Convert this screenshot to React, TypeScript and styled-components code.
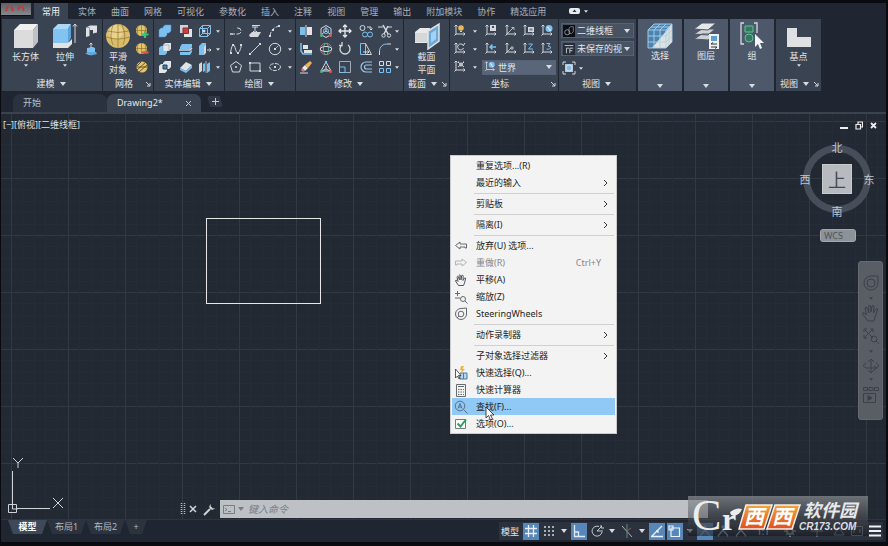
import React from "react";
import styled, { createGlobalStyle, css } from "styled-components";

const c = {
  chrome: "#202631",
  panel: "#3a4351",
  panelLight: "#4d596b",
  line: "#222832",
  canvas: "#222933",
  text: "#d3d8de",
  pale: "#d9dde2",
  blue: "#7cc0f0",
  active: "#5786b8",
  strip: "#3a4250",
};

const GlobalStyle = createGlobalStyle`
  *, *::before { box-sizing: border-box; }
  body {
    margin: 0;
    background: #07090c;
    font-family: "Noto Sans", "Noto Sans CJK SC", sans-serif;
    font-size: 9px;
    color: ${c.text};
  }
  button, input, select {
    font: inherit;
    color: inherit;
    margin: 0;
    padding: 0;
    border: 0;
    background: none;
  }
  svg { display: block; flex: none; }
  h1, h2, p { margin: 0; font: inherit; }
`;

/* ---------- icons ---------- */

const L = "#d5d9de";
const B = "#7cc0f0";
const G = "#4fb286";
const R = "#d8594f";
const Y = "#e3c56c";

const ucs = (
  <path d="M3 1v9h9M1.5 2.5 3 1l1.5 1.5M10.5 8.5 12 10l-1.5 1.5M3 10l-1.5 1.5" stroke={L} />
);

const glyphs: Record<string, React.ReactNode> = {
  polysolid: (
    <>
      <path d="M2 3.5 6 1.5h7v7L9 9.5V6H5.500v6L2 13z" fill="#dfe2e5" />
      <path d="M2 3.500h3.500V6" stroke="#9ba3ad" />
    </>
  ),
  presspull: (
    <>
      <path d="M3 6 9 5l2 1v6l-7 1-1-2z" fill={B} />
      <path d="M1 11.500 4 10h8l1 2-6 1.500z" fill="#5da8e0" />
      <path d="M7 6V1M5.500 2.500 7 1l1.500 1.500" stroke={L} />
    </>
  ),
  meshMore: (
    <>
      <circle cx="6.500" cy="6.500" r="5.500" fill={Y} />
      <path d="M1 6.500h11M6.500 1v11M3 2.500q-1.500 4 0 8M10 2.500q1.500 4 0 8" stroke="#94722b" strokeWidth=".7" />
      <path d="M10 7v7M6.500 10.500h7" stroke="#3cc276" strokeWidth="2.200" />
    </>
  ),
  meshLess: (
    <>
      <circle cx="6.500" cy="6.500" r="5.500" fill={Y} />
      <path d="M1 6.500h11M6.500 1v11M3 2.500q-1.500 4 0 8M10 2.500q1.500 4 0 8" stroke="#94722b" strokeWidth=".7" />
      <path d="M7 10.500h6.500" stroke={R} strokeWidth="2.400" />
    </>
  ),
  meshRefine: (
    <>
      <circle cx="7" cy="7" r="5.500" fill={Y} />
      <path d="M2 10 11 2M4 12l8-7M2 6l4-4M1.500 7h11" stroke="#5d4a24" strokeWidth=".9" />
    </>
  ),
  union: <path d="M1 6 3 4h2V3l2-2h6v6l-2 2H9v2l-2 2H1z" fill={B} stroke="#4c93cc" strokeWidth=".5" />,
  subtract: (
    <>
      <path d="M1 6 3 4h6v7l-2 2H1z" fill={B} />
      <path d="M5 3 7 1h6v6l-2 2H5z" fill="#e2e5e8" />
      <path d="M5 9V3h6v6" stroke="#8e98a5" strokeWidth=".6" />
    </>
  ),
  intersect: (
    <>
      <path d="M1 6 3 4h6v7l-2 2H1zM5 3l2-2h6v6l-2 2H5z" fill="#e2e5e8" />
      <path d="M5 5h4v4H5z" fill="#3b82be" stroke="#2d3c50" />
    </>
  ),
  interfere: (
    <>
      <path d="M1 1h8v8H1z" fill="#cfd4da" />
      <path d="M5 5h8v8H5z" fill="#e2e5e8" />
      <path d="M4 4h5.500v5.500H4z" fill="#c8403c" stroke="#813039" />
    </>
  ),
  sliceSolid: (
    <>
      <path d="M1 5 3 2h10v3l-2 2H1zM1 10h9l3-2v2l-2 3H1z" fill={B} />
      <path d="M0 8h11l2-2" stroke={L} strokeWidth="1.500" />
    </>
  ),
  thicken: (
    <>
      <path d="M1 8 7 2l6 3-6 6z" fill="#e2e5e8" />
      <path d="m1 8 6 3 6-6v3l-6 5-6-3z" fill={B} />
    </>
  ),
  extractEdges: (
    <>
      <path d="M1.500 4.500h8v8h-8zM4.500 1.500h8v8l-3 3M1.500 4.500l3-3M9.500 4.500l3-3M4.500 1.500v8h8M1.500 12.500l3-3" stroke={B} />
      <circle cx="6" cy="7" r="1.500" fill={L} />
    </>
  ),
  extrudeFace: (
    <>
      <path d="M1 4 4 1h4v3L6 6v7H1z" fill={B} />
      <path d="M6 5 8 3v8l-2 2z" fill={L} />
      <path d="M9 8h4M11.500 6.500 13 8l-1.500 1.500" stroke={L} />
    </>
  ),
  separate: (
    <>
      <path d="M1 4 4 2v9l-3 2z" fill={L} />
      <path d="M9 4 12 2v9l-3 2zM5 4l2-1v8l-2 1z" fill={B} />
      <path d="M8 1v12" stroke={L} strokeWidth=".7" />
    </>
  ),
  polyline: <path d="M1 10h8a3 3 0 0 0 0-6H8M1 10h3" stroke={L} strokeDasharray="5 1.500" />,
  project: (
    <>
      <path d="M1 11 4 8h9l-3 5H2z" fill={L} />
      <path d="M4 3h6M7 3v6M5 7l2 2 2-2M4 1.500h8" stroke={L} />
    </>
  ),
  arc: (
    <>
      <path d="M2 12Q3 4 11 2" stroke={L} strokeDasharray="4 1.500" />
      <path d="M1 11h2v2H1zM10 1h2v2h-2zM4 5h2v2H4z" fill={L} />
    </>
  ),
  spline: (
    <>
      <path d="M1.500 11C3 1 5 1 6.500 7s4 5 6-4" stroke={L} />
      <path d="M1 10h2v2H1zM3 2h2v2H3zM8 10h2v2H8zM11 2h2v2h-2z" fill={L} />
    </>
  ),
  line: (
    <>
      <path d="M2 12 12 2" stroke={L} />
      <path d="M1 11h2v2H1zM11 1h2v2h-2z" fill={L} />
    </>
  ),
  circle: (
    <>
      <circle cx="7" cy="7" r="5.700" stroke={L} />
      <path d="m7 7 3.500-3.500" stroke={B} />
      <path d="M6 6h2v2H6z" fill={L} />
    </>
  ),
  polygon: (
    <>
      <path d="m7 1.500 5.500 4-2 6.500h-7l-2-6.500z" stroke={L} />
      <circle cx="7" cy="7" r="1" fill={L} />
    </>
  ),
  rect: (
    <>
      <path d="M2 3h10v8H2z" stroke={L} />
      <path d="M1 2h2v2H1zM11 10h2v2h-2z" fill={L} />
    </>
  ),
  ellipse: (
    <>
      <ellipse cx="7" cy="7" rx="5.500" ry="3.500" stroke={L} strokeDasharray="4 1.200" />
      <path d="M6 6h2v2H6z" fill={L} />
    </>
  ),
  mirror: (
    <>
      <path d="M1 3h5v8H1z" fill={B} />
      <path d="M8 3h5v8H8z" fill="#e2e5e8" />
      <path d="M7 1v12" stroke={L} />
    </>
  ),
  align: (
    <>
      <path d="M2 1v8l2 3h9" stroke={B} strokeWidth="1.500" />
      <path d="M4 3h5v4H4zM5 8h8v3H5z" fill="#e2e5e8" />
    </>
  ),
  erase: (
    <>
      <path d="m3 8 3 3 3-3-3-3z" fill="#e8e8e8" />
      <path d="m6 5 5-4 2 2-4 5z" fill="#e9b15c" />
      <path d="m3 8 3 3-2 1-2-2z" fill="#d87777" />
      <path d="M1 13h8" stroke={L} />
    </>
  ),
  move3d: (
    <>
      <path d="m7 1.500 5 3v6l-5 3-5-3v-6z" stroke={L} />
      <path d="M7 7v-4M7 7l4 3M7 7l-4 3" stroke={L} />
      <circle cx="7" cy="7" r="2.500" stroke={B} />
      <circle cx="2.500" cy="11.500" r="1.500" fill={G} />
      <circle cx="11.500" cy="11.500" r="1.500" fill={R} />
    </>
  ),
  rotate3d: (
    <>
      <circle cx="7" cy="7" r="5.700" stroke="#b8747c" />
      <ellipse cx="7" cy="7" rx="2.500" ry="5.700" stroke={G} />
      <ellipse cx="7" cy="7" rx="5.700" ry="2.500" stroke={L} />
    </>
  ),
  scale3d: (
    <>
      <path d="m7 2 5 9H2zM7 6v3l4 2M7 9l-4 2" stroke={L} />
      <circle cx="2.500" cy="11.500" r="1.500" fill={G} />
      <circle cx="11.500" cy="11.500" r="1.500" fill={R} />
      <circle cx="7" cy="2" r="1.200" fill={B} />
    </>
  ),
  move: <path d="M7 1v12M1 7h12M5 3l2-2 2 2M5 11l2 2 2-2M3 5 1 7l2 2M11 5l2 2-2 2" stroke="#e6e9ec" strokeWidth="1.300" />,
  rotate: <path d="M4 3a5 5 0 1 0 6 0M4 0v3.500H1" stroke={L} strokeWidth="1.300" />,
  scale: (
    <>
      <path d="M1.500 1.500h11v11h-11z" stroke="#9eabbb" />
      <path d="M1.500 7h5.500v5.500H1.500z" stroke={B} />
    </>
  ),
  copy: (
    <>
      <circle cx="3.500" cy="4" r="2.500" stroke={L} />
      <circle cx="6" cy="10.500" r="2.500" stroke={B} />
      <circle cx="11" cy="10.500" r="2.500" stroke={B} />
      <path d="M8 3h4v3M10.500 4.500 12 6l1.500-1.500" stroke={L} />
    </>
  ),
  stretch: (
    <>
      <path d="M1.500 1.500h5v11h-5z" stroke={B} />
      <path d="m6.500 1.500 6 11h-6M4 10h6M8.500 8.500 10 10l-1.500 1.500" stroke={L} />
    </>
  ),
  offset: <path d="M13 2H7a5 5 0 0 0 0 10h6M13 5H7.500a2 2 0 0 0 0 4H13" stroke="#9cc6ea" strokeWidth="1.200" />,
  trim: (
    <>
      <path d="m5 1 5 9M10 2 6 10" stroke={L} strokeWidth="1.500" />
      <circle cx="5.500" cy="11.500" r="1.700" stroke={L} />
      <circle cx="11" cy="11.500" r="1.700" stroke={L} />
      <path d="M0 3h5M10 3h4" stroke={L} />
    </>
  ),
  fillet: (
    <>
      <path d="M1.500 13V9" stroke={L} />
      <path d="M1.500 9A7 7 0 0 1 9 2" stroke={B} />
      <path d="M9 2h4" stroke={L} />
    </>
  ),
  array: (
    <>
      <path d="M1.500 1.500h4v4h-4zM8.500 1.500h4v4h-4z" stroke={L} />
      <path d="M1.500 8.500h4v4h-4zM8.500 8.500h4v4h-4z" stroke={B} />
    </>
  ),
  ucsBulb: (<>{ucs}<circle cx="8" cy="4" r="2.800" fill="#e7b95b" /><path d="M7 7.500h2" stroke={L} /></>),
  ucsNamed: (<>{ucs}<path d="M6 1h6v6H6z" fill={L} /><path d="M8 2h2v2H8z" fill="#3b5068" /></>),
  ucs3pt: (<>{ucs}<path d="m3 10 6-6M7.500 3.500H10V6" stroke={L} strokeWidth=".8" /></>),
  ucsView: (<>{ucs}<path d="M6 3h6v5H6z" fill={L} /><path d="M7.500 4.500h3v2h-3z" fill="#6d7884" /></>),
  ucsWorld: (<>{ucs}<circle cx="9" cy="4.500" r="3.500" fill={B} /><path d="M7 3q2 0 2 2t2 1" stroke="#e8f4ff" /></>),
  ucsX: (<>{ucs}<path d="M10 3a3 3 0 1 0 .5 3M12 1l-2 3" stroke={L} /></>),
  ucsPrev: (<>{ucs}<path d="M12 5H6M8.500 2.500 6 5l2.500 2.500" stroke={B} strokeWidth="1.500" /></>),
  ucsOrigin: (<>{ucs}<path d="m3 10 4-4M7 5h2v2H7z" stroke={L} strokeWidth=".8" /></>),
  ucsZ: (<>{ucs}<path d="M6.500 2h4l-4 5h4.500" stroke={B} /></>),
  ucs3: (<>{ucs}<path d="M6.500 1.500H10l-2 2.500q3 0 2.500 2T6.500 7" stroke={B} /></>),
  ucsFace: (<>{ucs}<path d="m5 2 6 5M11 2 5 7M5 2h1M10 2h1" stroke={L} /><circle cx="8" cy="4.500" r="1.500" stroke={L} /></>),
  focus: (
    <>
      <path d="M1 4V1h3M10 1h3v3M13 10v3h-3M4 13H1v-3" stroke={L} />
      <path d="M3 3h8v8H3z" fill="#b9c6d2" />
      <circle cx="7" cy="7" r="3" fill={B} stroke="#eef" strokeWidth=".7" />
    </>
  ),
  visual: (
    <>
      <path d="M0 0h14v14H0z" fill="#0b0e12" />
      <circle cx="5" cy="8.500" r="3" stroke="#9ba2aa" />
      <path d="M7 3.500 9 2h3v6l-2 2H7z" stroke="#9ba2aa" strokeWidth=".8" />
    </>
  ),
  viewRef: (
    <>
      <path d="M0 0h14v14H0z" fill="#262d38" />
      <path d="M2 3h10M4 12V6h3M8 12V6h4M8 9h3" stroke={L} />
    </>
  ),
};

const Svg14 = ({ name, size = 14 }: { name: string; size?: number }) => (
  <svg width={size} height={size} viewBox="0 0 14 14" fill="none" aria-hidden="true">
    {glyphs[name]}
  </svg>
);

const Caret = ({ small, color = "#d9dde2" }: { small?: boolean; color?: string }) => (
  <svg width={small ? 4 : 6} height={small ? 3 : 4} viewBox="0 0 6 4" aria-hidden="true">
    <path d="M0 0h6L3 4z" fill={color} />
  </svg>
);

const Launcher = () => (
  <svg width="6" height="6" viewBox="0 0 6 6" fill="none" aria-hidden="true">
    <path d="m1 1 4 4M5 2v3H2" stroke={L} />
  </svg>
);

const bigIcons: Record<string, React.ReactNode> = {
  box: (
    <>
      <path d="m1 8 6-6h18l-5 6z" fill="#f1f1f1" />
      <path d="M1 8h19v18H1z" fill="#dcdcdd" />
      <path d="m20 8 5-6v18l-5 6z" fill="#bfc1c4" />
    </>
  ),
  extrude: (
    <>
      <path d="M1 20h16l3-3v5l-4 4H1z" fill="#e3e3e4" />
      <path d="m1 7 5-5h13l-3 5z" fill="#a9d8f8" />
      <path d="M1 7h15v14H1z" fill="#83c3f1" />
      <path d="m16 7 3-5v14l-3 5z" fill="#5ba3da" />
      <path d="M23 2v19M21 4.500l2-2.500 2 2.500" stroke={L} fill="none" />
    </>
  ),
  sphere: (
    <>
      <circle cx="13" cy="14" r="12" fill="#d9bd6b" />
      <circle cx="11" cy="10" r="7" fill="#f0dc97" opacity=".7" />
      <path d="M2 9q11 3 22 0M1 15q12 4 24 0M8 3q-4 11 0 20M17 3q5 11 1 20M13 2v24" stroke="#806425" strokeWidth=".7" fill="none" opacity=".8" />
    </>
  ),
  section: (
    <>
      <path d="m1 10 5-4h10v11l-3 4H1z" fill="#e9e9ea" />
      <path d="M1 11h12v9H1z" fill="#d6d7d9" />
      <path d="M14 9 25 2v17l-11 8z" fill="#6fa9d4" stroke="#e0e4e8" strokeWidth="1.500" />
      <path d="m17 11 5-3v9l-5 4z" fill="#9fd3f7" />
    </>
  ),
  select: (
    <>
      <path d="m1 8 6-6h18v18l-6 6H1z" fill="#4f83ad" />
      <path d="M25 2v18l-6 6H5z" fill="#e0e0dc" />
      <path d="M1 8h18v18H1zM7 2h18v18M1 8l6-6M19 8l6-6M19 26l6-6M7 8v18M13 8v18M1 14h18M1 20h18M13 2 7 8M19 2l-6 6M4 5h18v18M19 14l6-6M19 20l6-6" stroke="#a6d3f2" strokeWidth=".9" fill="none" />
    </>
  ),
  layers: (
    <>
      <path d="m1 17 8-5h13l-7 6zM1 12l8-5h13l-7 6z" fill="#cfd2d5" stroke="#4d596b" />
      <path d="m1 7 8-6h14l-8 7z" fill="#e6e7e8" stroke="#4d596b" />
      <path d="M16 12h10v15H16z" fill="#f0f1f2" />
      <path d="M18 14h6v5h-6z" fill="#5b9fd5" />
      <path d="M18 22h6M20 20.500 18 22M18 25h6M22 26.500l2-1.500" stroke="#333" fill="none" />
    </>
  ),
  group: (
    <>
      <path d="M5 1H2v21h3M15 1h3v10" stroke={L} strokeWidth="1.300" fill="none" />
      <path d="M6 4h8v6H6z" fill="#337a5c" stroke="#5cc596" />
      <circle cx="10" cy="16" r="4" fill="#337a5c" stroke="#5cc596" />
      <path d="M16 12v13l3-3 2 5 2-1-2-5h4z" fill="#f4f5f6" />
    </>
  ),
  base: <path d="M1 6h10v9h14v10H1z" fill="#dfe0e1" />,
};

const BigIcon = ({ name }: { name: string }) => (
  <svg width="26" height="28" viewBox="0 0 26 28" aria-hidden="true">
    {bigIcons[name]}
  </svg>
);

/* ---------- frame ---------- */

const Window = styled.div`
  display: flex;
  flex-direction: column;
  min-height: 100vh;
  background: ${c.chrome};
  border: solid #090b10;
  border-width: 3px 2px 4px 1px;
`;

const RibbonTabs = styled.nav`
  display: flex;
  height: 16px;
  align-items: stretch;
`;

const AppButton = styled.button`
  width: 30px;
  height: 13px;
  margin-right: 3px;
  padding-left: 3px;
  background: linear-gradient(#5b5f66, #85888d);
  border-bottom: 1px solid #111;
`;

const RibbonTab = styled.button<{ $on?: boolean }>`
  padding: 2px ${(p) => (p.$on ? 8 : 7)}px 0;
  margin-right: ${(p) => (p.$on ? 3 : 1)}px;
  color: ${(p) => (p.$on ? "#eef1f4" : "#a9b0ba")};
  background: ${(p) => (p.$on ? c.panel : "transparent")};
  white-space: nowrap;
  line-height: 14px;
`;

const VideoButton = styled.button`
  display: flex;
  align-items: center;
  gap: 4px;
  margin-left: 15px;
`;

const Ribbon = styled.div`
  display: flex;
  padding-left: 1px;
`;

const Panel = styled.section<{ $w: number; $gap?: number; $light?: boolean }>`
  display: flex;
  flex-direction: column;
  width: ${(p) => p.$w}px;
  margin-right: ${(p) => p.$gap ?? 1}px;
  background: ${(p) => (p.$light ? c.panelLight : c.panel)};
`;

const PanelBody = styled.div`
  display: flex;
  align-items: flex-start;
  height: 58px;
  padding-top: 3px;
`;

const PanelTitle = styled.h2`
  display: flex;
  align-items: center;
  height: 14px;
  padding-right: 2px;
  line-height: 14px;
`;

const TitleText = styled.span`
  flex: 1;
  display: flex;
  align-items: center;
  justify-content: center;
  gap: 5px;
  color: #e3e6ea;
`;

const BigButton = styled.button<{ $w: number }>`
  display: flex;
  flex-direction: column;
  align-items: center;
  width: ${(p) => p.$w}px;
  line-height: 13px;
  color: #e3e6ea;
  & > svg + span { display: block; }
  & > span + svg { margin-top: 1px; }
`;

const LightButton = styled.button`
  display: flex;
  flex-direction: column;
  align-items: center;
  height: 72px;
  padding: 3px 0;
  line-height: 12px;
  color: #e3e6ea;
  & > span + svg { margin-top: auto; }
`;

const ToolGrid = styled.div<{ $cols: string }>`
  display: grid;
  grid-template-columns: ${(p) => p.$cols};
  grid-auto-rows: 18px;
`;

const Tool = styled.button`
  display: flex;
  align-items: center;
  justify-content: center;
`;

const Stack = styled.div`
  display: flex;
  flex-direction: column;
  align-items: flex-start;
  gap: 3px;
  padding: 1px 2px 0;
  flex: 1;
  min-width: 0;
`;

const SelectWrap = styled.label<{ $span?: boolean }>`
  position: relative;
  display: flex;
  align-items: center;
  width: 100%;
  height: 15px;
  background: #475262;
  border: 1px solid #566173;
  ${(p) => p.$span && css`grid-column: 3 / 7; align-self: center; justify-self: end; width: 74px; background: #596679;`}
  & > svg:first-child { margin-left: 1px; }
  & > svg:last-child {
    position: absolute;
    right: 3px;
    pointer-events: none;
  }
`;

const Select = styled.select`
  appearance: none;
  flex: 1;
  min-width: 0;
  padding: 0 2px;
  margin-right: 9px;
  color: #e3e6ea;
  height: 13px;
  line-height: 13px;
`;

/* ---------- document tabs ---------- */

const DocTabs = styled.nav`
  display: flex;
  align-items: flex-end;
  height: 23px;
  padding-left: 12px;
  border-bottom: 2px solid ${c.strip};
`;

const DocTab = styled.div<{ $on?: boolean }>`
  display: flex;
  align-items: center;
  justify-content: space-between;
  width: 94px;
  height: 18px;
  padding: 0 9px 0 10px;
  border-radius: 7px 7px 0 0;
  background: ${(p) => (p.$on ? "#3a4351" : "#2b323f")};
  color: ${(p) => (p.$on ? "#e6e9ec" : "#b9bfc8")};
`;

const PlainButton = styled.button`
  line-height: 12px;
  display: flex;
  align-items: center;
`;

const AddTab = styled(PlainButton)`
  align-self: center;
  justify-content: center;
  width: 16px;
  height: 11px;
  margin-left: 6px;
  border-radius: 3px;
  background: #303845;
  clip-path: polygon(0 0, 80% 0, 100% 100%, 20% 100%);
`;

/* ---------- drawing area ---------- */

const gridLine = "#313944";
const minor = "#252c37";
const stops = `${gridLine} 0 1px, transparent 1px 11px, ${minor} 11px 12px, transparent 12px 23px, ${minor} 23px 24px, transparent 24px 34px, ${minor} 34px 35px, transparent 35px 46px, ${minor} 46px 47px, transparent 47px`;

const Canvas = styled.main`
  position: relative;
  flex: 1;
  background-color: ${c.canvas};
  background-image: linear-gradient(90deg, ${stops}), linear-gradient(${stops});
  background-size: 57px 57px;
  background-position: 10px 7px;
  border-bottom: 1px solid #2d3541;
`;

const ViewLabel = styled.p`
  padding: 4px 2px;
  line-height: 13px;
  color: #dde1e5;
`;

const DrawnRect = styled.div`
  position: absolute;
  left: 205px;
  top: 104px;
  width: 115px;
  height: 86px;
  border: 1px solid #e4e6e8;
`;

const Axes = styled.svg`
  position: absolute;
  left: 6px;
  bottom: 1px;
`;

const WindowButtons = styled.div`
  position: absolute;
  right: 9px;
  top: 7px;
  display: flex;
  gap: 7px;
`;

const ViewCube = styled.div`
  position: absolute;
  right: 10px;
  top: 26px;
  display: grid;
  grid-template: 14px 50px 14px / 14px 50px 14px;
  place-items: center;
  font: 12px/14px "Noto Sans CJK SC", sans-serif;
  color: #c3c7cc;
  &::before {
    content: "";
    grid-area: 1 / 1 / 4 / 4;
    width: 68px;
    height: 68px;
    border: 7px solid #474e59;
    border-radius: 50%;
  }
`;

const Direction = styled.button<{ $area: string }>`
  grid-area: ${(p) => p.$area};
  font-size: 11px;
`;

const CubeFace = styled.button`
  grid-area: 2 / 2;
  width: 30px;
  height: 30px;
  background: #b7babe;
  border: 1px solid #c8cbce;
  color: #454a51;
  font-size: 18px;
  line-height: 26px;
`;

const Wcs = styled.button`
  position: absolute;
  right: 30px;
  top: 115px;
  width: 36px;
  height: 13px;
  padding-left: 3px;
  text-align: left;
  line-height: 11px;
  border-radius: 3px;
  border: 1px solid #a5a9af;
  background: #8d9299;
  color: #4e545c;
`;

const NavBar = styled.div`
  position: absolute;
  right: 3px;
  top: 147px;
  width: 25px;
  height: 159px;
  display: flex;
  flex-direction: column;
  align-items: center;
  justify-content: space-between;
  padding: 12px 0 15px;
  background: #595e65;
  border: 1px solid #656a71;
  border-radius: 3px;
`;

const CommandBar = styled.form`
  position: absolute;
  left: 179px;
  right: 178px;
  bottom: 1px;
  height: 18px;
  display: flex;
  align-items: center;
  gap: 3px;
`;

const CommandField = styled.label`
  flex: 1;
  display: flex;
  align-items: center;
  gap: 3px;
  height: 18px;
  padding-left: 3px;
  background: #bdc1c5;
`;

const CommandInput = styled.input`
  flex: 1;
  min-width: 0;
  margin-left: 1px;
  font-style: italic;
  font-size: 10px;
  color: #4d545c;
  outline: none;
  &::placeholder { color: #777d84; opacity: 1; }
`;

/* ---------- context menu ---------- */

const Menu = styled.div`
  position: absolute;
  left: 449px;
  top: 41px;
  width: 167px;
  padding: 1px;
  background: #f3f3f4;
  border: 1px solid #c9cbce;
  color: #1e1f21;
`;

const MenuItem = styled.button<{ $hot?: boolean }>`
  display: grid;
  grid-template-columns: 16px 1fr auto;
  column-gap: 6px;
  align-items: center;
  width: 100%;
  height: 17px;
  padding: 0 7px 0 2px;
  text-align: left;
  line-height: 17px;
  white-space: nowrap;
  background: ${(p) => (p.$hot ? "#90c8f6" : "transparent")};
  &:disabled { color: #85878a; }
`;

const Shortcut = styled.span`
  padding-right: 7px;
`;

const MenuRule = styled.div`
  height: 1px;
  margin: 2px 1px 1px 22px;
  background: #cfd0d2;
`;

const Pointer = styled.svg`
  position: absolute;
  left: 484px;
  top: 292px;
`;

const menuIcons: Record<string, React.ReactNode> = {
  undo: <path d="M1.500 6.500 6 3v2h6.500v4H11V8H6v2z" stroke="#666a6f" />,
  redo: <path d="M12.500 6.500 8 3v2H1.500v4H3V8h5v2z" stroke="#b3b5b7" />,
  pan: <path d="M4.500 12.500 1.500 8q0-1.500 1.500-.5l1 1L3 4q.5-1.500 1.500 0l1 3-.5-4.500q1-1.500 1.700 0L7 7l.7-4.500q1.200-1 1.500.5L9 7.500 10.500 5q1.500-.5 1 1L10.500 10l-1 2.500z" stroke="#55585c" />,
  zoom: (
    <>
      <path d="M1 3.500h5M3.500 1v5M1 8h5" stroke="#66696d" />
      <circle cx="9" cy="9" r="2.500" stroke="#66696d" />
      <path d="m11 11 2.500 2.500" stroke="#66696d" />
    </>
  ),
  wheel: (
    <>
      <path d="M12.500 1v6A5.500 5.500 0 1 1 7 1.500z" stroke="#66696d" />
      <circle cx="7" cy="7" r="2.800" stroke="#66696d" />
      <path d="m3 11 2-2" stroke="#66696d" />
    </>
  ),
  quick: (
    <>
      <path d="M6 7h7v6H6z" fill="#b6d7ee" stroke="#527997" />
      <path d="M9.500 7v6" stroke="#527997" />
      <path d="M1.500 3v9l2-2 1.500 3 1-.5L4.500 9.500H7z" fill="#fff" stroke="#333" strokeWidth=".8" />
      <path d="m7 0-1 4h2L6 8l5-5H8.500L10 0z" fill="#efb13a" />
    </>
  ),
  calc: (
    <>
      <path d="M2.500 1.500h9v12h-9z" stroke="#66696d" />
      <path d="M4 3.500h6M4 6.500h1.500M6.500 6.500H8M9 6.500h1M4 9h1.500M6.500 9H8M9 9h1M4 11.500h1.500M6.500 11.500H8M9 11.500h1" stroke="#66696d" strokeWidth="1.200" />
    </>
  ),
  find: (
    <>
      <circle cx="6" cy="6" r="4.800" stroke="#57718a" />
      <path d="m9.500 9.500 4 4M4 8.500 6 3.500l2 5M4.700 7h2.600" stroke="#57718a" />
    </>
  ),
  check: (
    <>
      <path d="M1.500 2.500h10v9h-10z" fill="#fff" stroke="#777b80" />
      <path d="m3.500 6.500 3 3 5.500-7" stroke="#28a256" strokeWidth="2" />
    </>
  ),
};

type Entry = { label: string; icon?: string; sub?: boolean; key2?: string; off?: boolean; hot?: boolean } | null;

const entries: Entry[] = [
  { label: "重复选项...(R)" },
  { label: "最近的输入", sub: true },
  null,
  { label: "剪贴板", sub: true },
  null,
  { label: "隔离(I)", sub: true },
  null,
  { label: "放弃(U) 选项...", icon: "undo" },
  { label: "重做(R)", icon: "redo", key2: "Ctrl+Y", off: true },
  { label: "平移(A)", icon: "pan" },
  { label: "缩放(Z)", icon: "zoom" },
  { label: "SteeringWheels", icon: "wheel" },
  null,
  { label: "动作录制器", sub: true },
  null,
  { label: "子对象选择过滤器", sub: true },
  { label: "快速选择(Q)...", icon: "quick" },
  { label: "快速计算器", icon: "calc" },
  { label: "查找(F)...", icon: "find", hot: true },
  { label: "选项(O)...", icon: "check" },
];

/* ---------- footer ---------- */

const Footer = styled.footer`
  position: relative;
  display: flex;
  justify-content: space-between;
  align-items: flex-start;
  height: 22px;
  padding: 0 3px 0 7px;
`;

const LayoutTabs = styled.nav`
  display: flex;
`;

const LayoutTab = styled.button<{ $on?: boolean; $w?: number }>`
  width: ${(p) => p.$w ?? 39}px;
  height: 14px;
  line-height: 14px;
  color: ${(p) => (p.$on ? "#fff" : "#b4bac2")};
  font-weight: ${(p) => (p.$on ? 700 : 400)};
  background: ${(p) => (p.$on ? "#3d4958" : "#2b333f")};
  clip-path: polygon(0 0, 100% 0, calc(100% - 5px) 100%, 5px 100%);
`;

const StatusBar = styled.div`
  display: flex;
  align-items: center;
  gap: 2px;
  height: 18px;
  margin-top: 2px;
  background: #2b323e;
`;

const StatusButton = styled.button<{ $on?: boolean; $w?: number }>`
  display: flex;
  align-items: center;
  justify-content: center;
  width: ${(p) => p.$w ?? 16}px;
  height: 17px;
  color: #e6e9ec;
  background: ${(p) => (p.$on ? c.active : "transparent")};
`;

const statusIcons: Record<string, React.ReactNode> = {
  grid: <path d="M4.500 1v12M9.500 1v12M1 4.500h12M1 9.500h12" stroke="#e8eef5" strokeWidth="1.300" />,
  snap: (
    <path d="M2 3h2M6 3h2M10 3h2M2 7h2M6 7h2M10 7h2M2 11h2M6 11h2M10 11h2" stroke="#d5d9de" strokeWidth="1.600" />
  ),
  ortho: <path d="M2.500 1v11.500H13M2.500 8h4v4.500" stroke="#dfeaf5" strokeWidth="1.300" />,
  polar: <path d="M12 8A5 5 0 1 1 9 2.500M7 7l5-5M7 7h6M11 1v3h3" stroke="#c5cad1" />,
  iso: (
    <>
      <path d="m2 2 10 11" stroke="#a9b0b9" />
      <path d="M7 0v14" stroke="#5f8d77" />
      <path d="m7 7 4-3" stroke="#a05b5b" />
    </>
  ),
  track: <path d="M1 12.500h12M2 12 12 2M6 7h2v2" stroke="#eaf2fa" strokeWidth="1.300" />,
  osnap: <path d="M3 4h8.500v8.500H3zM1 2h4v4H1z" stroke="#eaf2fa" strokeWidth="1.200" />,
  person: <path d="m2 12 5-6 5 6M7 1v5M5 3h4" stroke="#9fb7cf" strokeWidth="1.200" />,
  gear: (
    <>
      <circle cx="7" cy="7" r="3" stroke="#8d949e" strokeWidth="2" />
      <path d="M7 1v2M7 11v2M1 7h2M11 7h2M3 3l1.500 1.500M9.500 9.500 11 11M11 3 9.500 4.500M4.500 9.500 3 11" stroke="#8d949e" strokeWidth="1.500" />
    </>
  ),
  plus: <path d="M7 1v12M1 7h12" stroke="#8d949e" />,
  isolate: <path d="m7 3 5 8H2zM9 2h3" stroke="#8d949e" />,
  screen: <path d="M1.500 2.500h11v9h-11zM4 9V5M10 5v4" stroke="#8d949e" />,
  menu: <path d="M1 2.500h12M1 7h12M1 11.500h12" stroke="#f0f2f4" strokeWidth="1.800" />,
};

const SIcon = ({ set, name }: { set: Record<string, React.ReactNode>; name: string }) => (
  <svg width="14" height="14" viewBox="0 0 14 14" fill="none" aria-hidden="true">
    {set[name]}
  </svg>
);

const Watermark = styled.div`
  position: absolute;
  right: 18px;
  bottom: 6px;
  width: 180px;
  height: 40px;
  background: linear-gradient(rgba(140, 143, 148, 0.7), rgba(90, 94, 100, 0.6) 45%, rgba(20, 22, 27, 0.6));
`;

/* ---------- composition ---------- */

const tabNames = ["常用", "实体", "曲面", "网格", "可视化", "参数化", "插入", "注释", "视图", "管理", "输出", "附加模块", "协作", "精选应用"];

const Tools = ({ cols, items }: { cols: string; items: string[] }) => (
  <ToolGrid $cols={cols}>
    {items.map((n, i) => (
      <Tool key={i} aria-label={n === "caret" ? "更多" : n}>
        {n === "caret" ? <Caret small /> : <Svg14 name={n} />}
      </Tool>
    ))}
  </ToolGrid>
);

const Title = ({ text, caret = true, launch }: { text: string; caret?: boolean; launch?: boolean }) => (
  <PanelTitle>
    <TitleText>
      {text}
      {caret && <Caret />}
    </TitleText>
    {launch && <Launcher />}
  </PanelTitle>
);

const LightPanel = ({ icon, text }: { icon: string; text: string }) => (
  <Panel $w={44} $gap={2} $light>
    <LightButton>
      <BigIcon name={icon} />
      <span>{text}</span>
      <Caret />
    </LightButton>
  </Panel>
);

const RibbonArea = () => (
  <Ribbon>
    <Panel $w={100}>
      <PanelBody>
        <BigButton $w={47}>
          <BigIcon name="box" />
          <span>长方体</span>
          <Caret small />
        </BigButton>
        <BigButton $w={32}>
          <BigIcon name="extrude" />
          <span>拉伸</span>
          <Caret small />
        </BigButton>
        <Tools cols="20px" items={["polysolid", "presspull"]} />
      </PanelBody>
      <Title text="建模" />
    </Panel>
    <Panel $w={50}>
      <PanelBody>
        <BigButton $w={30}>
          <BigIcon name="sphere" />
          <span>平滑</span>
          <span>对象</span>
        </BigButton>
        <Tools cols="18px" items={["meshMore", "meshLess", "meshRefine"]} />
      </PanelBody>
      <Title text="网格" caret={false} launch />
    </Panel>
    <Panel $w={70}>
      <PanelBody>
        <Tools
          cols="22px 20px 18px 8px"
          items={["union", "interfere", "extractEdges", "caret", "subtract", "sliceSolid", "extrudeFace", "caret", "intersect", "thicken", "separate", "caret"]}
        />
      </PanelBody>
      <Title text="实体编辑" />
    </Panel>
    <Panel $w={70}>
      <PanelBody>
        <Tools
          cols="22px 16px 24px 6px"
          items={["polyline", "project", "arc", "caret", "spline", "line", "circle", "caret", "polygon", "rect", "ellipse", "caret"]}
        />
      </PanelBody>
      <Title text="绘图" />
    </Panel>
    <Panel $w={107}>
      <PanelBody>
        <Tools
          cols="20px 20px 18px 24px 14px 10px"
          items={["mirror", "move3d", "move", "copy", "trim", "caret", "align", "rotate3d", "rotate", "stretch", "fillet", "caret", "erase", "scale3d", "scale", "offset", "array", "caret"]}
        />
      </PanelBody>
      <Title text="修改" />
    </Panel>
    <Panel $w={45}>
      <PanelBody>
        <BigButton $w={45}>
          <BigIcon name="section" />
          <span>截面</span>
          <span>平面</span>
        </BigButton>
      </PanelBody>
      <Title text="截面" launch />
    </Panel>
    <Panel $w={108}>
      <PanelBody>
        <ToolGrid $cols="20px 10px 22px 18px 18px 18px">
          {["ucsBulb", "caret", "ucsNamed", "ucs3pt", "ucsView", "ucsWorld", "ucsX", "caret", "ucsPrev", "ucsOrigin", "ucsZ", "ucs3", "ucsFace", "caret"].map((n, i) => (
            <Tool key={i} aria-label={n}>{n === "caret" ? <Caret small /> : <Svg14 name={n} />}</Tool>
          ))}
          <SelectWrap $span>
            <Svg14 name="ucsWorld" size={12} />
            <Select aria-label="坐标系" defaultValue="世界">
              <option>世界</option>
            </Select>
            <Caret />
          </SelectWrap>
        </ToolGrid>
      </PanelBody>
      <Title text="坐标" caret={false} launch />
    </Panel>
    <Panel $w={77} $gap={2}>
      <PanelBody>
        <Stack>
          <SelectWrap>
            <Svg14 name="visual" size={12} />
            <Select aria-label="视觉样式" defaultValue="二维线框">
              <option>二维线框</option>
            </Select>
            <Caret />
          </SelectWrap>
          <SelectWrap>
            <Svg14 name="viewRef" size={12} />
            <Select aria-label="命名视图" defaultValue="未保存的视图">
              <option>未保存的视图</option>
            </Select>
            <Caret />
          </SelectWrap>
          <Tools cols="16px 8px" items={["focus", "caret"]} />
        </Stack>
      </PanelBody>
      <Title text="视图" />
    </Panel>
    <LightPanel icon="select" text="选择" />
    <LightPanel icon="layers" text="图层" />
    <LightPanel icon="group" text="组" />
    <Panel $w={45}>
      <PanelBody>
        <BigButton $w={45}>
          <BigIcon name="base" />
          <span>基点</span>
          <Caret small />
        </BigButton>
      </PanelBody>
      <Title text="视图" launch />
    </Panel>
  </Ribbon>
);

const ContextMenu = () => (
  <Menu role="menu">
    {entries.map((e, i) =>
      e === null ? (
        <MenuRule key={i} role="separator" />
      ) : (
        <MenuItem key={i} role="menuitem" $hot={e.hot} disabled={e.off}>
          <span>{e.icon && <SIcon set={menuIcons} name={e.icon} />}</span>
          <span>{e.label}</span>
          {e.key2 && <Shortcut>{e.key2}</Shortcut>}
          {e.sub && (
            <svg width="5" height="8" viewBox="0 0 5 8" fill="none" aria-hidden="true">
              <path d="m1 1 3 3-3 3" stroke="#333" />
            </svg>
          )}
        </MenuItem>
      )
    )}
  </Menu>
);

const dark = "#3b4148";

const Navigation = () => (
  <NavBar>
    <svg width="18" height="18" viewBox="0 0 18 18" fill="none" stroke={dark}>
      <path d="M16 2v7a7 7 0 1 1-7-7z" />
      <circle cx="9" cy="9" r="4" />
    </svg>
    <Caret small color={dark} />
    <svg width="20" height="18" viewBox="0 0 20 18" fill="none" stroke={dark}>
      <path d="M7 17 1.500 10q0-2 2-1l2 2L4 4q1-2 2 0l2 5-.5-7q1-2 2 0l.5 6 1-6q1.500-1.500 2 .5L12.500 9 15 5q2-1 1.500 1L14 13l-1 4z" />
    </svg>
    <svg width="18" height="18" viewBox="0 0 18 18" fill="none" stroke={dark}>
      <path d="m2 2 9 9M11 2l-9 9M2 5V2h3M8 2h3v3M2 8v3h3" />
      <circle cx="12" cy="12" r="3" />
      <path d="m14 14 3 3" />
    </svg>
    <Caret small color={dark} />
    <svg width="18" height="16" viewBox="0 0 18 16" fill="none" stroke={dark}>
      <path d="M9 1v14M6 4l3-3 3 3M6 12l3 3 3-3M4 5Q-1 8 4 10h10q5-2 0-5M12 8l3 2-3 2" />
    </svg>
    <Caret small color={dark} />
    <svg width="18" height="18" viewBox="0 0 18 18" fill="none" stroke={dark}>
      <path d="M1.500 1.500h4v3h-4zM7 1.500h4v3H7zM12.500 1.500h4v3h-4zM1.500 7.500h12v9h-12z" />
      <path d="m6 9.500 4 2.500-4 2.500z" fill={dark} />
    </svg>
  </NavBar>
);

const Brand = () => (
  <Watermark>
    <svg width="180" height="40" viewBox="0 0 180 40" role="img" aria-label="西西软件园 CR173.COM">
      <defs>
        <linearGradient id="tile" x1="0" y1="0" x2="0" y2="1">
          <stop offset="0" stopColor="#f2a73c" />
          <stop offset="1" stopColor="#df4e24" />
        </linearGradient>
      </defs>
      <g fill="#eceded" fontFamily="'Liberation Serif', serif">
        <text x="4" y="34" fontSize="44">C</text>
        <text x="34" y="34" fontSize="32" fontWeight="700">r</text>
      </g>
      <path d="M42 16q6-5 12-3-3 8-11 6z" fill="#eceded" />
      <path d="M58 9h26l-8 24H51zM87 9h25l-8 24H79z" fill="url(#tile)" stroke="#f5efe8" strokeWidth="1.500" />
      <g fill="#fff" fontFamily="'Noto Sans CJK SC', sans-serif" fontWeight="700">
        <text x="56" y="28" fontSize="20" fontStyle="italic">西</text>
        <text x="84" y="28" fontSize="20" fontStyle="italic">西</text>
        <text x="115" y="21" fontSize="18" fontStyle="italic" fill="#e7e8ea">软件园</text>
      </g>
      <text x="111" y="34" fontSize="10" fontStyle="italic" fontWeight="700" fontFamily="'Liberation Sans', sans-serif" fill="#dcdee0">
        CR173.COM
      </text>
    </svg>
  </Watermark>
);

export default function App() {
  return (
    <>
      <GlobalStyle />
      <Window>
        <RibbonTabs aria-label="功能区">
          <AppButton aria-label="应用程序">
            <svg width="22" height="6" viewBox="0 0 22 6" fill="none" aria-hidden="true">
              <path d="M2 5 4 0M7 0l2 5M14 4l2-4M18 0l2 5" stroke="#c03a35" strokeWidth="1.800" />
            </svg>
          </AppButton>
          {tabNames.map((t, i) => (
            <RibbonTab key={t} $on={i === 0}>{t}</RibbonTab>
          ))}
          <VideoButton aria-label="显示选项">
            <svg width="11" height="6" viewBox="0 0 11 6" aria-hidden="true">
              <rect width="11" height="6" rx="2" fill="#e9ebee" />
              <path d="M3.500 4h4l-2-2.500z" fill="#333" />
            </svg>
            <Caret small />
          </VideoButton>
        </RibbonTabs>
        <RibbonArea />
        <DocTabs aria-label="文件">
          <DocTab>
            <PlainButton>开始</PlainButton>
          </DocTab>
          <DocTab $on>
            <PlainButton>Drawing2*</PlainButton>
            <PlainButton aria-label="关闭">
              <svg width="7" height="7" viewBox="0 0 7 7" aria-hidden="true">
                <path d="m1 1 5 5M6 1 1 6" stroke="#c3c8ce" />
              </svg>
            </PlainButton>
          </DocTab>
          <AddTab aria-label="新图形">
            <svg width="7" height="7" viewBox="0 0 7 7" aria-hidden="true">
              <path d="M3.500 0v7M0 3.500h7" stroke="#c3c8ce" />
            </svg>
          </AddTab>
        </DocTabs>

        <Canvas>
          <ViewLabel>[−][俯视][二维线框]</ViewLabel>
          <DrawnRect />
          <Axes width="60" height="60" viewBox="0 0 60 60" fill="none" stroke="#d0d4d8" aria-label="坐标轴">
            <path d="M5.500 13v33M9 50.500h34M1.500 46.500h8v8h-8zM5.500 46v5h5" />
            <path d="m6 0 5 5 5-5M11 5v5M46 40l10 10M56 40 46 50" />
          </Axes>
          <WindowButtons>
            <PlainButton aria-label="最小化">
              <svg width="8" height="9" viewBox="0 0 8 9"><path d="M0 7h8" stroke="#eee" strokeWidth="2" /></svg>
            </PlainButton>
            <PlainButton aria-label="还原">
              <svg width="8" height="9" viewBox="0 0 8 9" fill="none"><path d="M1 3.500h4.500V8H1zM3 3V1h4.500v5H6" stroke="#eee" strokeWidth="1.200" /></svg>
            </PlainButton>
            <PlainButton aria-label="关闭视口">
              <svg width="7" height="9" viewBox="0 0 7 9"><path d="m1 2 5 5M6 2 1 7" stroke="#eee" strokeWidth="1.800" /></svg>
            </PlainButton>
          </WindowButtons>
          <ViewCube>
            <Direction $area="1 / 2">北</Direction>
            <Direction $area="2 / 1">西</Direction>
            <CubeFace>上</CubeFace>
            <Direction $area="2 / 3">东</Direction>
            <Direction $area="3 / 2">南</Direction>
          </ViewCube>
          <Wcs>WCS</Wcs>
          <Navigation />
          <CommandBar>
            <svg width="6" height="12" viewBox="0 0 6 12" aria-hidden="true">
              <path d="M1.500 0v12M4.500 0v12" stroke="#b5bac0" strokeWidth="1.500" strokeDasharray="1 1" />
            </svg>
            <PlainButton type="button" aria-label="关闭命令行">
              <svg width="8" height="8" viewBox="0 0 8 8"><path d="m1 1 6 6M7 1 1 7" stroke="#d0d4d8" strokeWidth="1.500" /></svg>
            </PlainButton>
            <PlainButton type="button" aria-label="自定义">
              <svg width="17" height="13" viewBox="0 0 17 13" fill="none">
                <path d="m4 12 6-6" stroke="#d0d4d8" strokeWidth="2" />
                <path d="M11 1a3 3 0 1 0 4 4l-2 .5L10.500 3z" fill="#d0d4d8" />
              </svg>
            </PlainButton>
            <CommandField>
              <svg width="12" height="9" viewBox="0 0 12 9" fill="none" aria-hidden="true">
                <path d="M.5.500h11v8H.5zM2 3l2 1.500L2 6M5 6.500h3" stroke="#777d84" />
              </svg>
              <Caret color="#777d84" />
              <CommandInput aria-label="命令" placeholder="键入命令" />
            </CommandField>
          </CommandBar>
          <ContextMenu />
          <Pointer width="10" height="15" viewBox="0 0 10 15" aria-hidden="true">
            <path d="M1 1v11l2.500-2.500 2 4.500 2-1-2-4H9z" fill="#fff" stroke="#222" strokeWidth=".8" />
          </Pointer>
        </Canvas>

        <Footer>
          <LayoutTabs aria-label="布局">
            <LayoutTab $on>模型</LayoutTab>
            <LayoutTab>布局1</LayoutTab>
            <LayoutTab>布局2</LayoutTab>
            <LayoutTab $w={22} aria-label="新建布局">+</LayoutTab>
          </LayoutTabs>
          <StatusBar>
            <StatusButton $w={22}>模型</StatusButton>
            <StatusButton $on aria-label="栅格"><SIcon set={statusIcons} name="grid" /></StatusButton>
            <StatusButton aria-label="捕捉"><SIcon set={statusIcons} name="snap" /></StatusButton>
            <StatusButton $w={10} aria-label="捕捉选项"><Caret /></StatusButton>
            <StatusButton $on aria-label="正交"><SIcon set={statusIcons} name="ortho" /></StatusButton>
            <StatusButton aria-label="极轴"><SIcon set={statusIcons} name="polar" /></StatusButton>
            <StatusButton $w={10} aria-label="极轴选项"><Caret /></StatusButton>
            <StatusButton aria-label="等轴测"><SIcon set={statusIcons} name="iso" /></StatusButton>
            <StatusButton $w={10} aria-label="等轴测选项"><Caret /></StatusButton>
            <StatusButton $on aria-label="追踪"><SIcon set={statusIcons} name="track" /></StatusButton>
            <StatusButton $on aria-label="对象捕捉"><SIcon set={statusIcons} name="osnap" /></StatusButton>
            <StatusButton $w={10} aria-label="对象捕捉选项"><Caret /></StatusButton>
            <StatusButton $on aria-label="注释可见性"><SIcon set={statusIcons} name="person" /></StatusButton>
            <StatusButton aria-label="自动缩放"><SIcon set={statusIcons} name="person" /></StatusButton>
            <StatusButton aria-label="注释比例"><SIcon set={statusIcons} name="person" /></StatusButton>
            <StatusButton $w={24}>1:1</StatusButton>
            <StatusButton $w={26} aria-label="工作空间"><SIcon set={statusIcons} name="gear" /></StatusButton>
            <StatusButton $w={24} aria-label="注释监视器"><SIcon set={statusIcons} name="plus" /></StatusButton>
            <StatusButton aria-label="隔离对象"><SIcon set={statusIcons} name="isolate" /></StatusButton>
            <StatusButton aria-label="全屏"><SIcon set={statusIcons} name="screen" /></StatusButton>
            <StatusButton aria-label="自定义"><SIcon set={statusIcons} name="menu" /></StatusButton>
          </StatusBar>
          <Brand />
        </Footer>
      </Window>
    </>
  );
}
